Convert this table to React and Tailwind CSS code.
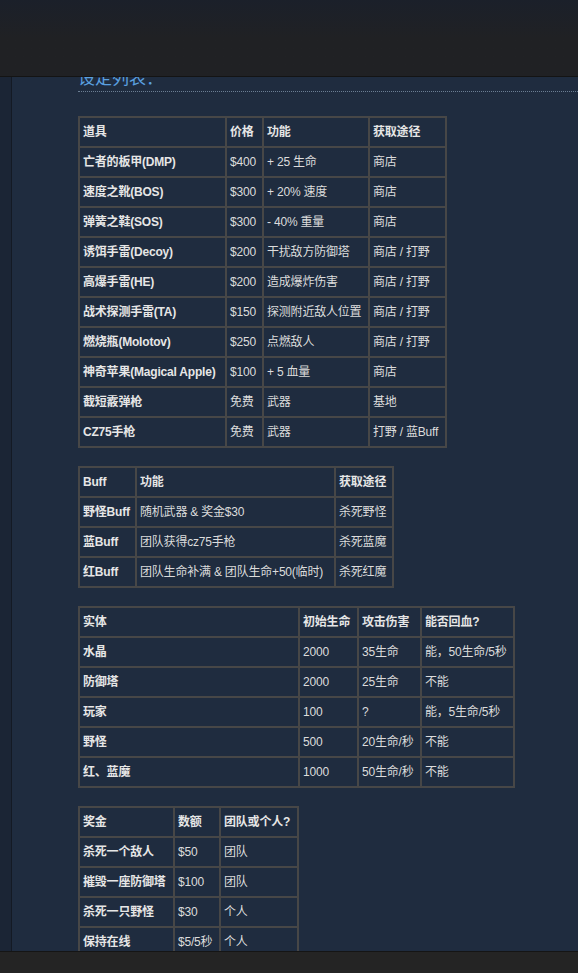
import React from 'react';

const FONT = { fontFamily: '"Liberation Sans", Arial, "Noto Sans CJK SC", sans-serif' };

const items = [
  ['道具', '价格', '功能', '获取途径'],
  ['亡者的板甲(DMP)', '$400', '+ 25 生命', '商店'],
  ['速度之靴(BOS)', '$300', '+ 20% 速度', '商店'],
  ['弹簧之鞋(SOS)', '$300', '- 40% 重量', '商店'],
  ['诱饵手雷(Decoy)', '$200', '干扰敌方防御塔', '商店 / 打野'],
  ['高爆手雷(HE)', '$200', '造成爆炸伤害', '商店 / 打野'],
  ['战术探测手雷(TA)', '$150', '探测附近敌人位置', '商店 / 打野'],
  ['燃烧瓶(Molotov)', '$250', '点燃敌人', '商店 / 打野'],
  ['神奇苹果(Magical Apple)', '$100', '+ 5 血量', '商店'],
  ['截短霰弹枪', '免费', '武器', '基地'],
  ['CZ75手枪', '免费', '武器', '打野 / 蓝Buff'],
];

const buffs = [
  ['Buff', '功能', '获取途径'],
  ['野怪Buff', '随机武器 & 奖金$30', '杀死野怪'],
  ['蓝Buff', '团队获得cz75手枪', '杀死蓝魔'],
  ['红Buff', '团队生命补满 & 团队生命+50(临时)', '杀死红魔'],
];

const units = [
  ['实体', '初始生命', '攻击伤害', '能否回血?'],
  ['水晶', '2000', '35生命', '能，50生命/5秒'],
  ['防御塔', '2000', '25生命', '不能'],
  ['玩家', '100', '?', '能，5生命/5秒'],
  ['野怪', '500', '20生命/秒', '不能'],
  ['红、蓝魔', '1000', '50生命/秒', '不能'],
];

const rewards = [
  ['奖金', '数额', '团队或个人?'],
  ['杀死一个敌人', '$50', '团队'],
  ['摧毁一座防御塔', '$100', '团队'],
  ['杀死一只野怪', '$30', '个人'],
  ['保持在线', '$5/5秒', '个人'],
];

function Table({ rows, widths }) {
  return (
    <table className="border-collapse table-fixed text-[12px] mb-[18px]" style={{ width: widths.reduce((a, b) => a + b, 0) }}>
      <colgroup>
        {widths.map((w, i) => <col key={i} style={{ width: w }} />)}
      </colgroup>
      <tbody>
        {rows.map((r, ri) => (
          <tr key={ri} className="h-[30px]">
            {r.map((c, ci) => (
              <td
                key={ci}
                className={`border-2 border-[#474747] px-[3px] whitespace-nowrap overflow-hidden leading-[26px] tracking-[-0.2px] ${ri === 0 || ci === 0 ? 'font-bold text-[#e6e6e6]' : 'text-[#dcdcdc]'}`}
              >
                {c}
              </td>
            ))}
          </tr>
        ))}
      </tbody>
    </table>
  );
}

export default function App() {
  return (
    <div className="relative h-[973px] w-[578px] overflow-hidden bg-[#1f2c3f]" style={FONT}>
      {/* top bar */}
      <div className="absolute top-0 left-0 right-0 h-[77px] bg-gradient-to-b from-[#1b202a] via-[#202124] to-[#202124] border-b border-[#141414] z-10"></div>

      <div className="flex h-full">
        <div className="w-[12px] shrink-0 bg-[#1b2535] border-r border-[#141a24]"></div>
        <div className="flex-1 pl-[66px] pt-[69px]">
          <div className="text-[17px] leading-[20px] text-[#5aa0e0] border-b border-dotted border-[#6b7e93] pb-[2px]">设定列表：</div>
          <div className="mt-[24px]">
            <Table rows={items} widths={[147, 37, 106, 77]} />
            <Table rows={buffs} widths={[57, 199, 58]} />
            <Table rows={units} widths={[220, 59, 63, 93]} />
            <Table rows={rewards} widths={[95, 46, 78]} />
          </div>
        </div>
      </div>

      {/* bottom bar */}
      <div className="absolute bottom-0 left-0 right-0 h-[22px] bg-[#242424] border-t border-[#151515] z-10"></div>
    </div>
  );
}
